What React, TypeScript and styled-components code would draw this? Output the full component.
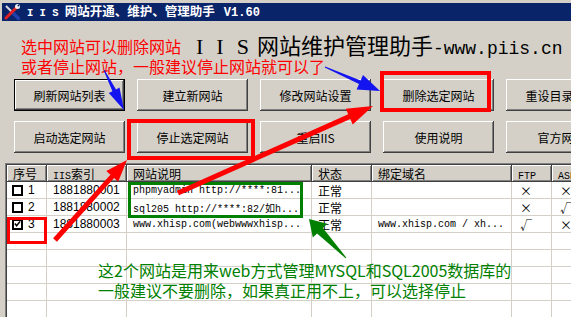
import styled, { createGlobalStyle } from "styled-components";

const GlobalStyle = createGlobalStyle`
  html, body {
    margin: 0;
    padding: 0;
    background: #d4d0c8;
  }
  body {
    font-family: "Noto Sans CJK SC", sans-serif;
  }
`;

const GRID = "40px 80px 185px 60px 140px 40px 60px";

type Pt = [number, number];

const arrowPoints = (
  tail: Pt,
  tip: Pt,
  tailW: number,
  shaftW: number,
  headLen: number,
  headW: number
) => {
  const dx = tip[0] - tail[0];
  const dy = tip[1] - tail[1];
  const len = Math.hypot(dx, dy);
  const ux = dx / len;
  const uy = dy / len;
  const nx = -uy;
  const ny = ux;
  const bx = tip[0] - ux * headLen;
  const by = tip[1] - uy * headLen;
  const p = (x: number, y: number, w: number) =>
    `${(x + (nx * w) / 2).toFixed(1)},${(y + (ny * w) / 2).toFixed(1)}`;
  return [
    p(tail[0], tail[1], tailW),
    p(bx, by, shaftW),
    p(bx, by, headW),
    `${tip[0]},${tip[1]}`,
    p(bx, by, -headW),
    p(bx, by, -shaftW),
    p(tail[0], tail[1], -tailW),
  ].join(" ");
};

const arrows = [
  { color: "#1414f0", tail: [104, 70] as Pt, tip: [124, 110] as Pt, tailW: 1, shaftW: 4, headLen: 22, headW: 12 },
  { color: "#1414f0", tail: [325, 67] as Pt, tip: [380, 91] as Pt, tailW: 1, shaftW: 4, headLen: 22, headW: 16 },
  { color: "#ff0000", tail: [55, 240] as Pt, tip: [127, 160] as Pt, tailW: 5, shaftW: 5, headLen: 22, headW: 16 },
  { color: "#ff0000", tail: [178, 193] as Pt, tip: [373, 106] as Pt, tailW: 5, shaftW: 5, headLen: 26, headW: 17 },
  { color: "#008000", tail: [346, 258] as Pt, tip: [309, 219] as Pt, tailW: 1, shaftW: 8, headLen: 16, headW: 20 },
];

const buttons = [
  { label: "刷新网站列表", isDefault: true },
  { label: "建立新网站" },
  { label: "修改网站设置" },
  { label: "删除选定网站" },
  { label: "重设目录权限" },
  { label: "启动选定网站" },
  { label: "停止选定网站" },
  { label: "重启IIS" },
  { label: "使用说明" },
  { label: "官方网站" },
];

const sites = [
  { no: "1", checked: false, idx: "1881880001", desc: "phpmyadmin http://****:81...", state: "正常", domain: "", ftp: "×", asp: "×" },
  { no: "2", checked: false, idx: "1881880002", desc: "sql205 http://****:82/如h...", state: "正常", domain: "", ftp: "×", asp: "√" },
  { no: "3", checked: true, idx: "1881880003", desc: "www.xhisp.com(webwwwxhisp...", state: "正常", domain: "www.xhisp.com / xh...", ftp: "√", asp: "×" },
];

const TitleIcon = () => (
  <svg width="16" height="16" viewBox="0 0 16 16">
    <line x1="2" y1="2" x2="9" y2="9" stroke="#d8d8e0" strokeWidth="2" />
    <line x1="9" y1="9" x2="15" y2="15" stroke="#2040b0" strokeWidth="3.5" strokeLinecap="round" />
    <line x1="13" y1="3" x2="2" y2="14" stroke="#e02020" strokeWidth="3" strokeLinecap="round" />
    <circle cx="13.5" cy="2.5" r="2.5" fill="#f0f0f0" />
    <circle cx="14.5" cy="1.5" r="1" fill="#0a246a" />
  </svg>
);

const CheckBox = ({ checked }: { checked: boolean }) => (
  <Box>
    {checked && (
      <svg width="8" height="8" viewBox="0 0 8 8">
        <path d="M1 3.5 L3 6 L7 1" stroke="#000" strokeWidth="1.8" fill="none" />
      </svg>
    )}
  </Box>
);

const App = () => {
  return (
    <Screen>
      <GlobalStyle />
      <Window>
        <TitleBar>
          <TitleIcon />
          <TitleText>
            <Mono>I I S </Mono>网站开通、维护、管理助手<Version>V1.60</Version>
          </TitleText>
        </TitleBar>

        <Banner>
          <BigTitle>
            <SerifCaps>IIS</SerifCaps>网站维护管理助手<BigMono>-www.piis.cn</BigMono>
          </BigTitle>
        </Banner>

        <ButtonGrid>
          {buttons.map((b) => (
            <WinButton key={b.label} isDefault={!!b.isDefault}>
              {b.label}
            </WinButton>
          ))}
        </ButtonGrid>

        <ListView>
          <ListInner>
            <HeaderRow>
              <HeaderCell>序号</HeaderCell>
              <HeaderCell>
                <SmallMono>IIS</SmallMono>索引
              </HeaderCell>
              <HeaderCell>网站说明</HeaderCell>
              <HeaderCell>状态</HeaderCell>
              <HeaderCell>绑定域名</HeaderCell>
              <HeaderCell>
                <SmallMono>FTP</SmallMono>
              </HeaderCell>
              <HeaderCell>
                <SmallMono>ASP</SmallMono>
              </HeaderCell>
            </HeaderRow>

            {sites.map((s) => (
              <Row key={s.no}>
                <Cell>
                  <CheckBox checked={s.checked} />
                  <Num>{s.no}</Num>
                </Cell>
                <Cell variant="sans">{s.idx}</Cell>
                <Cell variant="mono">{s.desc}</Cell>
                <Cell>{s.state}</Cell>
                <Cell variant="mono">{s.domain}</Cell>
                <Cell variant="mark">{s.ftp}</Cell>
                <Cell variant="mark">{s.asp}</Cell>
              </Row>
            ))}

            {Array.from({ length: 6 }).map((_, i) => (
              <Row key={`empty-${i}`}>
                {Array.from({ length: 7 }).map((__, j) => (
                  <Cell key={j} />
                ))}
              </Row>
            ))}
          </ListInner>
        </ListView>
      </Window>

      <RedNote>
        选中网站可以删除网站
        <br />
        或者停止网站，一般建议停止网站就可以了
      </RedNote>

      <MarkFrame color="#ff0000" thick={4} left={380} top={71} width={111} height={41} />
      <MarkFrame color="#ff0000" thick={4} left={127} top={119} width={128} height={41} />
      <MarkFrame color="#ff0000" thick={3} left={7} top={217} width={40} height={27} />
      <MarkFrame color="#008000" thick={3} left={128} top={182} width={175} height={36} />

      <GreenNote>
        这2个网站是用来web方式管理MYSQL和SQL2005数据库的
        <br />
        一般建议不要删除，如果真正用不上，可以选择停止
      </GreenNote>

      <ArrowLayer width="571" height="317" viewBox="0 0 571 317">
        {arrows.map((a, i) => (
          <polygon
            key={i}
            points={arrowPoints(a.tail, a.tip, a.tailW, a.shaftW, a.headLen, a.headW)}
            fill={a.color}
          />
        ))}
      </ArrowLayer>
    </Screen>
  );
};

export default App;

const Screen = styled.div`
  position: relative;
  width: 571px;
  height: 317px;
  overflow: hidden;
  background: #d4d0c8;
`;

const Window = styled.div`
  width: 660px;
  padding: 3px 0 0 2px;
`;

const TitleBar = styled.div`
  height: 18px;
  background: #0a246a;
  display: flex;
  align-items: center;
  gap: 7px;
  padding-left: 2px;
  color: #ffffff;
`;

const TitleText = styled.div`
  font-family: "Noto Sans CJK SC", sans-serif;
  font-weight: bold;
  font-size: 12.5px;
  line-height: 18px;
  white-space: nowrap;
`;

const Mono = styled.span`
  font-family: "Liberation Mono", monospace;
  font-size: 10.5px;
  font-weight: bold;
`;

const Version = styled.span`
  font-family: "Liberation Mono", monospace;
  font-size: 12px;
  font-weight: bold;
  margin-left: 9px;
`;

const Banner = styled.div`
  height: 58px;
  padding-left: 194px;
  box-sizing: border-box;
  padding-top: 12px;
`;

const BigTitle = styled.div`
  font-family: "Noto Sans CJK SC", sans-serif;
  font-size: 22px;
  line-height: 22px;
  color: #000000;
  white-space: nowrap;
`;

const SerifCaps = styled.span`
  font-family: "Liberation Serif", serif;
  letter-spacing: 13px;
  margin-right: -5px;
`;

const BigMono = styled.span`
  font-family: "Liberation Mono", monospace;
  font-size: 18px;
`;

const ButtonGrid = styled.div`
  display: grid;
  grid-template-columns: repeat(5, 111px);
  grid-auto-rows: 32px;
  column-gap: 12px;
  row-gap: 10px;
  margin-left: 12px;
`;

const WinButton = styled.div<{ isDefault: boolean }>`
  display: flex;
  align-items: center;
  justify-content: center;
  background: #d4d0c8;
  font-family: "Noto Sans CJK SC", sans-serif;
  font-size: 12px;
  color: #000000;
  white-space: nowrap;
  box-sizing: border-box;
  border: ${({ isDefault }) => (isDefault ? "1px solid #000000" : "none")};
  box-shadow: inset -1px -1px #404040, inset 1px 1px #ffffff,
    inset -2px -2px #808080, inset 2px 2px #d4d0c8;
`;

const ListView = styled.div`
  margin: 10px 0 0 3px;
  border: 1px solid;
  border-color: #808080 #ffffff #ffffff #808080;
`;

const ListInner = styled.div`
  border: 1px solid;
  border-color: #404040 #d4d0c8 #d4d0c8 #404040;
  background: #ffffff;
`;

const HeaderRow = styled.div`
  display: grid;
  grid-template-columns: ${GRID};
  height: 17px;
`;

const HeaderCell = styled.div`
  box-sizing: border-box;
  padding-left: 6px;
  background: #d4d0c8;
  font-size: 12px;
  line-height: 17px;
  color: #000000;
  white-space: nowrap;
  overflow: hidden;
  box-shadow: inset -1px -1px #404040, inset 1px 1px #ffffff,
    inset -2px -2px #808080;
`;

const SmallMono = styled.span`
  font-family: "Liberation Mono", monospace;
  font-size: 10px;
`;

const Row = styled.div`
  display: grid;
  grid-template-columns: ${GRID};
  height: 17px;
`;

const Cell = styled.div<{ variant?: "sans" | "mono" | "mark" }>`
  box-sizing: border-box;
  display: flex;
  align-items: center;
  border-right: 1px solid #d4d0c8;
  border-bottom: 1px solid #d4d0c8;
  padding-left: ${({ variant }) => (variant === "mark" ? "8px" : "6px")};
  font-family: ${({ variant }) =>
    variant === "sans"
      ? `"Liberation Sans", sans-serif`
      : variant === "mono"
      ? `"Liberation Mono", "Noto Sans CJK SC", monospace`
      : `"Noto Sans CJK SC", sans-serif`};
  font-size: ${({ variant }) => (variant === "mono" ? "10px" : "12px")};
  color: #000000;
  white-space: nowrap;
  overflow: hidden;
`;

const Box = styled.span`
  width: 11px;
  height: 11px;
  box-sizing: border-box;
  border: 2px solid #000000;
  background: #ffffff;
  margin-left: -1px;
  display: inline-flex;
  align-items: center;
  justify-content: center;
`;

const Num = styled.span`
  font-family: "Liberation Sans", sans-serif;
  font-size: 12px;
  margin-left: 5px;
`;

const RedNote = styled.div`
  position: absolute;
  left: 21px;
  top: 36px;
  font-family: "Noto Sans CJK SC", sans-serif;
  font-size: 16px;
  line-height: 20px;
  color: #ff0000;
  white-space: nowrap;
`;

const GreenNote = styled.div`
  position: absolute;
  left: 98px;
  top: 260px;
  font-family: "Noto Sans CJK SC", sans-serif;
  font-size: 16px;
  line-height: 20px;
  color: #008000;
  white-space: nowrap;
`;

const MarkFrame = styled.div<{
  color: string;
  thick: number;
  left: number;
  top: number;
  width: number;
  height: number;
}>`
  position: absolute;
  box-sizing: border-box;
  left: ${({ left }) => left}px;
  top: ${({ top }) => top}px;
  width: ${({ width }) => width}px;
  height: ${({ height }) => height}px;
  border: ${({ thick, color }) => `${thick}px solid ${color}`};
`;

const ArrowLayer = styled.svg`
  position: absolute;
  left: 0;
  top: 0;
  pointer-events: none;
`;
